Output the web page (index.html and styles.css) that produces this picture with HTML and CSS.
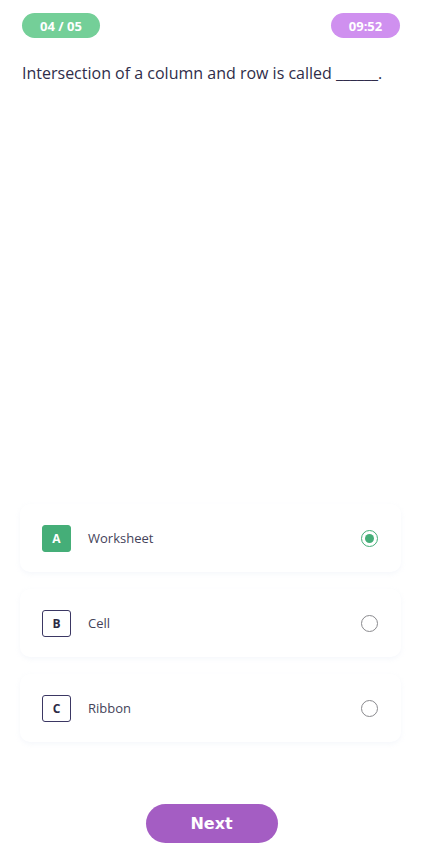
FILE: index.html
```html
<!DOCTYPE html>
<html>
<head>
<meta charset="utf-8">
<link rel="stylesheet" href="styles.css">
</head>
<body>
<div class="screen">
  <div class="top">
    <span class="pill pill-count">04 / 05</span>
    <span class="pill pill-time">09:52</span>
  </div>
  <p class="question">Intersection of a column and row is called ______.</p>
  <div class="options">
    <div class="option">
      <span class="letter letter-on">A</span>
      <span class="label">Worksheet</span>
      <span class="radio radio-on"></span>
    </div>
    <div class="option">
      <span class="letter">B</span>
      <span class="label">Cell</span>
      <span class="radio"></span>
    </div>
    <div class="option">
      <span class="letter">C</span>
      <span class="label">Ribbon</span>
      <span class="radio"></span>
    </div>
  </div>
  <div class="footer">
    <button class="next">Next</button>
  </div>
</div>
</body>
</html>
```
FILE: styles.css
```css
html, body {
  margin: 0;
  padding: 0;
  background: #ffffff;
}
.screen {
  height: 858px;
  display: flex;
  flex-direction: column;
  font-family: "Open Sans", "Noto Sans", sans-serif;
  color: #2e2c48;
  box-sizing: border-box;
}
.top {
  display: flex;
  justify-content: space-between;
  padding: 13px 23px 0 22px;
}
.pill {
  height: 25px;
  border-radius: 13px;
  color: #ffffff;
  font-weight: 700;
  font-size: 13px;
  display: flex;
  align-items: center;
  justify-content: center;
}
.pill-count {
  width: 78px;
  background: #74cf98;
}
.pill-time {
  width: 69px;
  background: #cf90ef;
}
.question {
  margin: 23px 0 0 22px;
  font-size: 16px;
  line-height: 24px;
  color: #2f2d4a;
}
.options {
  margin-top: auto;
  display: flex;
  flex-direction: column;
  gap: 17px;
  padding: 0 22px 0 20px;
}
.option {
  height: 68px;
  display: flex;
  align-items: center;
  padding: 0 23px 0 22px;
  background: #ffffff;
  border-radius: 10px;
  box-shadow: 0 2px 5px rgba(190, 205, 230, 0.16);
}
.letter {
  width: 27px;
  height: 25px;
  border: 1px solid #3b3763;
  border-radius: 3px;
  display: flex;
  align-items: center;
  justify-content: center;
  font-size: 12px;
  font-weight: 700;
  color: #2c2a45;
}
.letter-on {
  background: #45ae78;
  border-color: #45ae78;
  color: #ffffff;
}
.label {
  margin-left: 17px;
  font-size: 13px;
  font-weight: 400;
  color: #44435a;
  flex: 1;
}
.radio {
  width: 15px;
  height: 15px;
  border: 1.5px solid #8a8a8e;
  border-radius: 50%;
  display: flex;
  align-items: center;
  justify-content: center;
}
.radio-on {
  border-color: #45ae78;
}
.radio-on::after {
  content: "";
  width: 9px;
  height: 9px;
  border-radius: 50%;
  background: #45ae78;
}
.footer {
  display: flex;
  justify-content: center;
  padding: 62px 0 15px 0;
}
.next {
  width: 132px;
  height: 39px;
  border: none;
  border-radius: 20px;
  background: #a45dc3;
  color: #ffffff;
  font-family: "DejaVu Sans", sans-serif;
  font-weight: 700;
  font-size: 16px;
}
```
